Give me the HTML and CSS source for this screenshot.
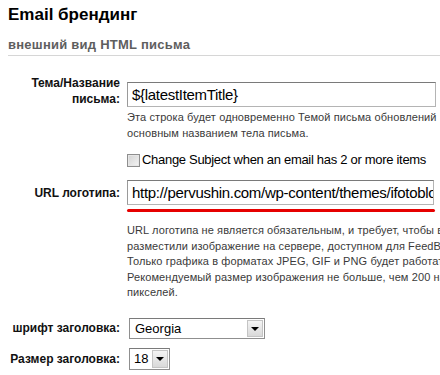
FILE: index.html
```html
<!DOCTYPE html>
<html>
<head>
<meta charset="utf-8">
<link rel="stylesheet" href="styles.css">
</head>
<body>
<div class="page">
  <h1 class="title">Email брендинг</h1>
  <h2 class="subtitle">внешний вид HTML письма</h2>

  <div class="row row-subject">
    <div class="lbl lbl-two">Тема/Название письма:</div>
    <div class="input input-subject">${latestItemTitle}</div>
    <div class="extra">
      <p class="help help-subject">Эта строка будет одновременно Темой письма обновлений<br>основным названием тела письма.</p>
      <div class="check"><span class="box"></span><span>Change Subject when an email has 2 or more items</span></div>
    </div>
  </div>

  <div class="row row-url">
    <div class="lbl">URL логотипа:</div>
    <div class="input input-url">http://pervushin.com/wp-content/themes/ifotoblog/images/logo.png</div>
    <div class="extra">
      <div class="redline"></div>
      <p class="help help-url">URL логотипа не является обязательным, и требует, чтобы вы<br>разместили изображение на сервере, доступном для FeedBurner.<br>Только графика в форматах JPEG, GIF и PNG будет работать.<br>Рекомендуемый размер изображения не больше, чем 200 на 200<br>пикселей.</p>
    </div>
  </div>

  <div class="row row-font">
    <div class="lbl">шрифт заголовка:</div>
    <div class="select select-font"><span class="sel-text">Georgia</span><span class="sel-btn"><span class="tri"></span></span></div>
  </div>

  <div class="row row-size">
    <div class="lbl">Размер заголовка:</div>
    <div class="select select-size"><span class="sel-text">18</span><span class="sel-btn"><span class="tri"></span></span></div>
  </div>
</div>
</body>
</html>
```

FILE: styles.css
```css
* { box-sizing: border-box; }
html, body { margin: 0; padding: 0; background: #fff; }
body { font-family: "Liberation Sans", Arial, sans-serif; color: #000; overflow: hidden; }
.page { width: 440px; height: 375px; padding: 5px 0 0 8px; overflow: hidden; }

.title { margin: 0; font-size: 17px; line-height: 20px; font-weight: bold; color: #000; }
.subtitle {
  margin: 12px 0 0 0; padding-bottom: 2px;
  font-size: 13px; line-height: 16px; font-weight: bold; color: #5e5e5e;
  border-bottom: 1px solid #d6d6d6; letter-spacing: 0.25px;
}

.row {
  display: grid;
  grid-template-columns: 112px 1fr;
  column-gap: 7px;
}
.lbl {
  grid-column: 1; grid-row: 1;
  align-self: center;
  text-align: right;
  font-size: 12px; line-height: 16px; font-weight: bold; color: #111;
}
.lbl-two { align-self: start; margin-top: -7px; }
.extra { grid-column: 2; grid-row: 2; min-width: 0; }

.input {
  grid-column: 2; grid-row: 1;
  height: 25px;
  border: 1px solid #b4b4b4; border-top-color: #7a7a7a; border-left-color: #9a9a9a;
  padding: 2px 0 0 4px;
  font-size: 15px; line-height: 20px; color: #000; letter-spacing: -0.3px;
  white-space: nowrap; overflow: hidden;
}
.input-subject { width: 309px; }
.input-url { width: 307px; }

.row-subject { margin-top: 26px; }
.help {
  margin: 0; font-size: 11px; line-height: 15.5px; color: #3a3a3a;
  letter-spacing: 0.1px; white-space: nowrap;
}
.help-subject { margin-top: 3px; }

.check {
  display: flex; align-items: center; margin-top: 11px;
  font-size: 13px; line-height: 16px; color: #000; letter-spacing: -0.3px; white-space: nowrap;
}
.box {
  width: 13px; height: 13px; margin-right: 2px; flex: none;
  border: 1px solid #8e8e8e;
  background: linear-gradient(135deg, #d2d2d2, #f4f4f4);
  box-shadow: inset 0 0 0 1px #e6e6e6;
}

.row-url { margin-top: 12px; }
.redline { height: 3px; width: 308px; margin: 4px 0 0 0; background: #e60000; border-radius: 2px; }
.help-url { margin-top: 11px; }

.row-font { margin-top: 17px; }
.row-size { margin-top: 9px; }

.select {
  grid-column: 2; grid-row: 1;
  display: flex; height: 21px;
  border: 1px solid #8f8f8f; border-top-color: #7a7a7a;
  background: #fff; margin-left: 2px;
}
.select-font { width: 136px; }
.select-size { width: 41px; height: 22px; }
.sel-text { flex: 1; padding: 0 0 0 5px; font-size: 13px; line-height: 19px; color: #000; }
.select-size .sel-text { padding-left: 4px; line-height: 20px; }
.sel-btn {
  width: 16px; margin: 1px;
  background: linear-gradient(#f4f4f4, #d9d9d9);
  border: 1px solid #c4c4c4;
  display: flex; align-items: center; justify-content: center;
}
.tri { width: 0; height: 0; border-left: 4px solid transparent; border-right: 4px solid transparent; border-top: 4px solid #000; margin-top: 1px; }
```
